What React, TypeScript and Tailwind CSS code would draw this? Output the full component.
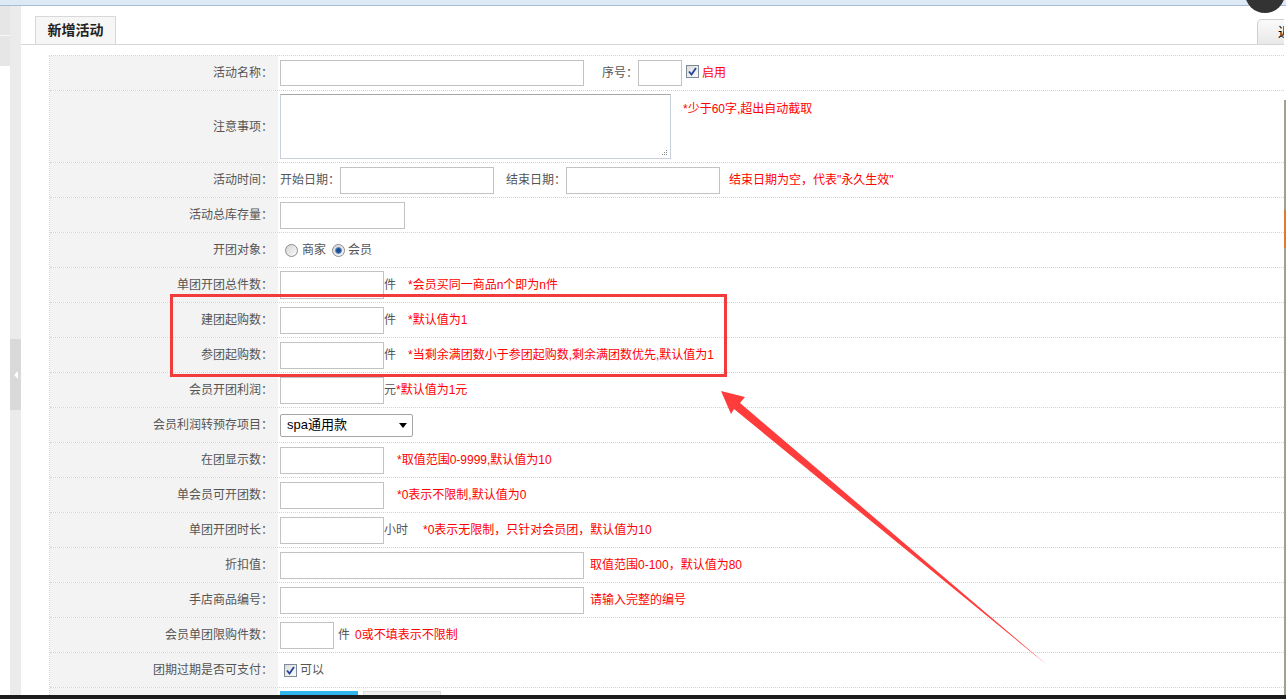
import React from "react";
import { X } from "lucide-react";

type RowProps = {
  label: string;
  tall?: boolean;
  top?: boolean;
  children?: React.ReactNode;
};

function Row({ label, tall, top, children }: RowProps) {
  return (
    <div className={`flex border-b border-dotted border-[#d2d2d2] ${tall ? "h-[72px]" : "h-[35px]"}`}>
      <div className="w-[228px] shrink-0 bg-[#f3f3f3] flex items-center justify-end pr-[5px] whitespace-nowrap">
        {label ? label + "：" : ""}
      </div>
      <div className={`flex-1 flex pl-[2px] whitespace-nowrap ${top ? "items-start pt-[3px]" : "items-center"}`}>
        {children}
      </div>
    </div>
  );
}

function Box({ className }: { className: string }) {
  return <div className={`shrink-0 border border-[#c2c2c2] bg-white ${className}`} />;
}

function Red({ className = "", children }: { className?: string; children: React.ReactNode }) {
  return <span className={`text-[#ff0000] ${className}`}>{children}</span>;
}

function Check({ className = "" }: { className?: string }) {
  return (
    <span className={`shrink-0 w-[13px] h-[13px] border border-[#7d8a98] bg-linear-to-br from-[#dcdcdc] to-[#fbfbfb] flex items-center justify-center ${className}`}>
      <svg width="9" height="9" viewBox="0 0 9 9">
        <path d="M1 4.5 L3.5 7.5 L8 1" fill="none" stroke="#23449a" strokeWidth="1.8" />
      </svg>
    </span>
  );
}

function Radio({ on, className = "" }: { on?: boolean; className?: string }) {
  return (
    <span className={`shrink-0 w-[13px] h-[13px] rounded-full border border-[#8c8c8c] bg-linear-to-br from-[#d6d6d6] to-[#fafafa] flex items-center justify-center ${className}`}>
      {on && <span className="w-[7px] h-[7px] rounded-full bg-[#1d4f8f] border border-[#5b8fd0]" />}
    </span>
  );
}

export default function App() {
  return (
    <div className="relative w-[1286px] h-[699px] overflow-hidden bg-white flex flex-col font-['Liberation_Sans','Noto_Sans_CJK_SC',sans-serif] text-[12px] text-[#555]">
      {/* top strip */}
      <div className="h-[6px] shrink-0 bg-[#dde9f6] border-b border-[#a9bcd2]" />

      <div className="flex-1 flex min-h-0">
        {/* left edge */}
        <div className="w-[10px] shrink-0 bg-white">
          <div className="h-[29px] bg-[#e6e6e6]" />
          <div className="h-px bg-[#f7f7f7]" />
          <div className="h-[30px] bg-[#e6e6e6]" />
        </div>
        <div className="w-[11px] shrink-0 bg-[#ebebeb]">
          <div className="mt-[333px] h-[71px] bg-[#d9d9d9] flex items-center justify-center">
            <span className="w-0 h-0 border-y-[4px] border-y-transparent border-r-[4px] border-r-white" />
          </div>
        </div>

        {/* main */}
        <div className="flex-1 min-w-0 flex flex-col overflow-hidden">
          <div className="h-[39px] shrink-0 flex items-end border-b border-[#d6d6d6] pl-[14px]">
            <div className="h-[28px] w-[81px] border border-b-0 border-[#d8d8d8] bg-[#f6f6f6] flex items-center justify-center text-[14px] font-bold text-[#222]">
              新增活动
            </div>
            <div className="ml-auto mr-[-33px] h-[25px] w-[60px] border border-b-0 border-[#cfcfcf] rounded-tl-[5px] bg-linear-to-b from-[#fafafa] to-[#e9e9e9] pl-[20px] flex items-center text-[14px] text-black">
              返回
            </div>
          </div>

          <div className="ml-[28px] mt-[10px] border-t border-l border-dotted border-[#d2d2d2]">
            <Row label="活动名称">
              <Box className="w-[304px] h-[26px]" />
              <span className="ml-[18px]">序号：</span>
              <Box className="w-[44px] h-[26px]" />
              <Check className="ml-[4px] -mt-[4px]" />
              <Red className="ml-[3px]">启用</Red>
            </Row>
            <Row label="注意事项" tall top>
              <div className="relative w-[391px] h-[65px] border border-[#c9d0da] border-t-[#a8a8a8] bg-white shrink-0">
                <svg className="absolute right-[2px] bottom-[2px]" width="7" height="7" viewBox="0 0 7 7">
                  <rect x="5" y="1" width="1" height="1" fill="#888" />
                  <rect x="3" y="3" width="1" height="1" fill="#888" />
                  <rect x="5" y="3" width="1" height="1" fill="#888" />
                  <rect x="1" y="5" width="1" height="1" fill="#888" />
                  <rect x="3" y="5" width="1" height="1" fill="#888" />
                  <rect x="5" y="5" width="1" height="1" fill="#888" />
                </svg>
              </div>
              <Red className="ml-[12px] mt-[7px] leading-[16px]">*少于60字,超出自动截取</Red>
            </Row>
            <Row label="活动时间">
              <span>开始日期：</span>
              <Box className="w-[154px] h-[27px]" />
              <span className="ml-[12px]">结束日期：</span>
              <Box className="w-[154px] h-[27px]" />
              <Red className="ml-[9px]">结束日期为空，代表"永久生效"</Red>
            </Row>
            <Row label="活动总库存量">
              <Box className="w-[125px] h-[27px]" />
            </Row>
            <Row label="开团对象">
              <Radio className="ml-[5px]" />
              <span className="ml-[4px]">商家</span>
              <Radio on className="ml-[6px]" />
              <span className="ml-[3px]">会员</span>
            </Row>
            <Row label="单团开团总件数">
              <Box className="w-[104px] h-[28px]" />
              <span>件</span>
              <Red className="ml-[12px]">*会员买同一商品n个即为n件</Red>
            </Row>
            <Row label="建团起购数">
              <Box className="w-[104px] h-[27px]" />
              <span>件</span>
              <Red className="ml-[12px]">*默认值为1</Red>
            </Row>
            <Row label="参团起购数">
              <Box className="w-[104px] h-[27px]" />
              <span>件</span>
              <Red className="ml-[12px]">*当剩余满团数小于参团起购数,剩余满团数优先,默认值为1</Red>
            </Row>
            <Row label="会员开团利润">
              <Box className="w-[104px] h-[27px]" />
              <span>元</span>
              <Red>*默认值为1元</Red>
            </Row>
            <Row label="会员利润转预存项目">
              <div className="shrink-0 w-[133px] h-[23px] border border-[#a6a6a6] rounded-[2px] bg-white flex items-center justify-between pl-[6px] pr-[5px] text-[13px] text-black">
                <span>spa通用款</span>
                <span className="w-0 h-0 border-x-[4px] border-x-transparent border-t-[5px] border-t-black" />
              </div>
            </Row>
            <Row label="在团显示数">
              <Box className="w-[104px] h-[27px]" />
              <Red className="ml-[13px]">*取值范围0-9999,默认值为10</Red>
            </Row>
            <Row label="单会员可开团数">
              <Box className="w-[104px] h-[27px]" />
              <Red className="ml-[13px]">*0表示不限制,默认值为0</Red>
            </Row>
            <Row label="单团开团时长">
              <Box className="w-[104px] h-[27px]" />
              <span>小时</span>
              <Red className="ml-[15px]">*0表示无限制，只针对会员团，默认值为10</Red>
            </Row>
            <Row label="折扣值">
              <Box className="w-[304px] h-[27px]" />
              <Red className="ml-[6px]">取值范围0-100，默认值为80</Red>
            </Row>
            <Row label="手店商品编号">
              <Box className="w-[304px] h-[27px]" />
              <Red className="ml-[6px]">请输入完整的编号</Red>
            </Row>
            <Row label="会员单团限购件数">
              <Box className="w-[54px] h-[27px]" />
              <span className="ml-[4px]">件</span>
              <Red className="ml-[5px]">0或不填表示不限制</Red>
            </Row>
            <Row label="团期过期是否可支付">
              <Check className="ml-[4px]" />
              <span className="ml-[3px]">可以</span>
            </Row>
            <Row label="" top>
              <div className="shrink-0 w-[78px] h-[30px] bg-[#30b6ec]" />
              <div className="shrink-0 ml-[5px] w-[78px] h-[30px] bg-[#efefef] border border-[#dcdcdc]" />
            </Row>
          </div>
        </div>

        {/* right window edge */}
        <div className="w-[2px] shrink-0 flex flex-col">
          <div className="h-[94px]" />
          <div className="h-[110px] bg-[#a3a08f]" />
          <div className="h-[38px] bg-[#e07a30]" />
          <div className="flex-1 bg-[#a3a08f]" />
        </div>
      </div>

      {/* bottom dark bar */}
      <div className="h-[4px] shrink-0 bg-[#1c1c1c]" />

      {/* close button */}
      <div className="absolute left-[1245px] top-[-27px] w-[40px] h-[40px] rounded-full bg-[#333] flex items-center justify-center">
        <X size={20} strokeWidth={2.5} color="#fff" />
      </div>

      {/* annotation */}
      <svg className="absolute left-0 top-0 pointer-events-none" width="1286" height="699">
        <rect x="171.5" y="295.5" width="554" height="80" fill="none" stroke="#f23c3c" strokeWidth="3" />
        <polygon points="721,391 745,397 740,403 1047,665 734,409 731,414" fill="#ff3c3c" />
      </svg>
    </div>
  );
}
